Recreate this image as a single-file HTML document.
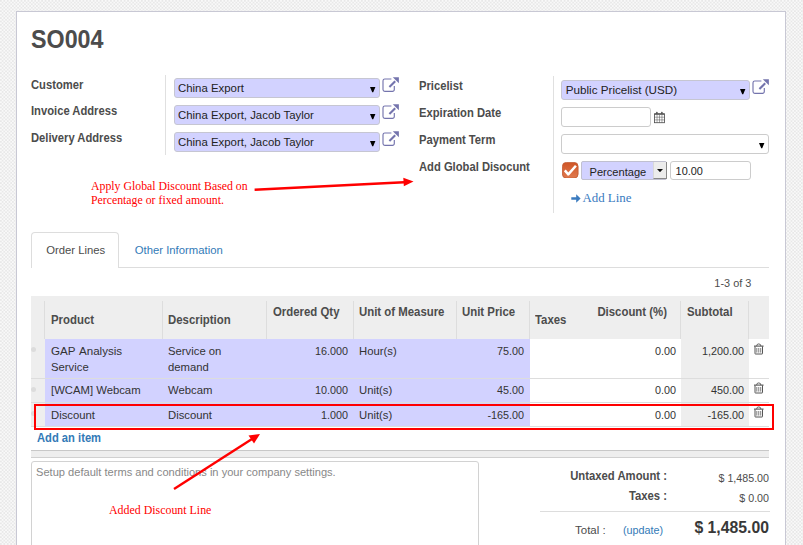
<!DOCTYPE html>
<html><head><meta charset="utf-8"><style>
html,body{margin:0;padding:0;}
body{width:803px;height:545px;overflow:hidden;position:relative;background-color:#efefef;
background-image:conic-gradient(#f9f9f9 25%,#e8e8e8 25% 50%,#f9f9f9 50% 75%,#e8e8e8 75%);background-size:3.44px 3.44px;}
.t{position:absolute;white-space:nowrap;font-kerning:none;}
.r{position:absolute;box-sizing:content-box;}
</style></head><body>
<div class="r" style="left:16px;top:11px;width:768px;height:700px;border:1px solid #c8c8d4;background:#fff;"></div>
<div class="t" style="left:31.3px;top:25.00px;font:bold 25.054px 'Liberation Sans', sans-serif;line-height:28.010px;color:#4c4c4c;transform:scaleX(0.93);transform-origin:0 0;">SO004</div>
<div class="t" style="left:31px;top:79.00px;font:bold 12.467px 'Liberation Sans', sans-serif;line-height:13.938px;color:#4c4c4c;transform:scaleX(0.9);transform-origin:0 0;">Customer</div>
<div class="t" style="left:31px;top:105.00px;font:bold 12.467px 'Liberation Sans', sans-serif;line-height:13.938px;color:#4c4c4c;transform:scaleX(0.9);transform-origin:0 0;">Invoice Address</div>
<div class="t" style="left:31px;top:132.00px;font:bold 12.467px 'Liberation Sans', sans-serif;line-height:13.938px;color:#4c4c4c;transform:scaleX(0.9);transform-origin:0 0;">Delivery Address</div>
<div class="t" style="left:419px;top:80.00px;font:bold 12.467px 'Liberation Sans', sans-serif;line-height:13.938px;color:#4c4c4c;transform:scaleX(0.9);transform-origin:0 0;">Pricelist</div>
<div class="t" style="left:419px;top:107.00px;font:bold 12.467px 'Liberation Sans', sans-serif;line-height:13.938px;color:#4c4c4c;transform:scaleX(0.9);transform-origin:0 0;">Expiration Date</div>
<div class="t" style="left:419px;top:134.00px;font:bold 12.467px 'Liberation Sans', sans-serif;line-height:13.938px;color:#4c4c4c;transform:scaleX(0.9);transform-origin:0 0;">Payment Term</div>
<div class="t" style="left:419px;top:161.00px;font:bold 12.467px 'Liberation Sans', sans-serif;line-height:13.938px;color:#4c4c4c;transform:scaleX(0.9);transform-origin:0 0;">Add Global Disocunt</div>
<div class="r" style="left:165px;top:75px;width:1px;height:80px;background:#e0e0e0;"></div>
<div class="r" style="left:553px;top:76px;width:1px;height:137px;background:#e0e0e0;"></div>
<div class="r" style="left:174px;top:78px;width:204px;height:18px;background:#d2d2ff;border:1px solid #c6c6d2;border-radius:3px;"></div>
<div class="t" style="left:178px;top:82.00px;font:normal 11.400px 'Liberation Sans', sans-serif;line-height:12.745px;color:#222;">China Export</div>
<svg class="r" style="left:370.1px;top:86.7px" width="6" height="6" viewBox="0 0 6 6"><path d="M0 0.1H5.4L3.2 5.2H2.2Z" fill="#000"/></svg>
<div class="r" style="left:174px;top:105px;width:204px;height:18px;background:#d2d2ff;border:1px solid #c6c6d2;border-radius:3px;"></div>
<div class="t" style="left:178px;top:109.00px;font:normal 11.400px 'Liberation Sans', sans-serif;line-height:12.745px;color:#222;">China Export, Jacob Taylor</div>
<svg class="r" style="left:370.1px;top:113.7px" width="6" height="6" viewBox="0 0 6 6"><path d="M0 0.1H5.4L3.2 5.2H2.2Z" fill="#000"/></svg>
<div class="r" style="left:174px;top:132px;width:204px;height:18px;background:#d2d2ff;border:1px solid #c6c6d2;border-radius:3px;"></div>
<div class="t" style="left:178px;top:136.00px;font:normal 11.400px 'Liberation Sans', sans-serif;line-height:12.745px;color:#222;">China Export, Jacob Taylor</div>
<svg class="r" style="left:370.1px;top:140.7px" width="6" height="6" viewBox="0 0 6 6"><path d="M0 0.1H5.4L3.2 5.2H2.2Z" fill="#000"/></svg>
<svg class="r" style="left:382px;top:77px" width="18" height="16" viewBox="0 0 18 16"><path d="M9.4 2H2.8A1.8 1.8 0 0 0 1 3.8V12.6A1.8 1.8 0 0 0 2.8 14.4H10.5A1.8 1.8 0 0 0 12.3 12.6V9" fill="none" stroke="#7474ad" stroke-width="1.15"/><path d="M7.4 10L13.2 4.2" stroke="#7474ad" stroke-width="2.1"/><path d="M10.8 0.2H16.9V6.3Z" fill="#7474ad"/></svg>
<svg class="r" style="left:382px;top:104px" width="18" height="16" viewBox="0 0 18 16"><path d="M9.4 2H2.8A1.8 1.8 0 0 0 1 3.8V12.6A1.8 1.8 0 0 0 2.8 14.4H10.5A1.8 1.8 0 0 0 12.3 12.6V9" fill="none" stroke="#7474ad" stroke-width="1.15"/><path d="M7.4 10L13.2 4.2" stroke="#7474ad" stroke-width="2.1"/><path d="M10.8 0.2H16.9V6.3Z" fill="#7474ad"/></svg>
<svg class="r" style="left:382px;top:131px" width="18" height="16" viewBox="0 0 18 16"><path d="M9.4 2H2.8A1.8 1.8 0 0 0 1 3.8V12.6A1.8 1.8 0 0 0 2.8 14.4H10.5A1.8 1.8 0 0 0 12.3 12.6V9" fill="none" stroke="#7474ad" stroke-width="1.15"/><path d="M7.4 10L13.2 4.2" stroke="#7474ad" stroke-width="2.1"/><path d="M10.8 0.2H16.9V6.3Z" fill="#7474ad"/></svg>
<div class="r" style="left:561px;top:80px;width:187px;height:18px;background:#d2d2ff;border:1px solid #c6c6d2;border-radius:3px;"></div>
<div class="t" style="left:565.8px;top:83.00px;font:normal 11.650px 'Liberation Sans', sans-serif;line-height:13.025px;color:#222;">Public Pricelist (USD)</div>
<svg class="r" style="left:740.1px;top:88.7px" width="6" height="6" viewBox="0 0 6 6"><path d="M0 0.1H5.4L3.2 5.2H2.2Z" fill="#000"/></svg>
<svg class="r" style="left:752px;top:79px" width="18" height="16" viewBox="0 0 18 16"><path d="M9.4 2H2.8A1.8 1.8 0 0 0 1 3.8V12.6A1.8 1.8 0 0 0 2.8 14.4H10.5A1.8 1.8 0 0 0 12.3 12.6V9" fill="none" stroke="#7474ad" stroke-width="1.15"/><path d="M7.4 10L13.2 4.2" stroke="#7474ad" stroke-width="2.1"/><path d="M10.8 0.2H16.9V6.3Z" fill="#7474ad"/></svg>
<div class="r" style="left:561px;top:107px;width:88px;height:18px;background:#fff;border:1px solid #ccc;border-radius:3px;"></div>
<svg class="r" style="left:654px;top:110.5px" width="11" height="13" viewBox="0 0 11 13"><rect x="0.5" y="2.9" width="10" height="8.8" fill="none" stroke="#505050" stroke-width="0.85"/><rect x="0.5" y="2.4" width="10" height="1.3" fill="#505050"/><rect x="2.2" y="0.7" width="1.3" height="2.4" rx="0.5" fill="#505050"/><rect x="7.2" y="0.7" width="1.3" height="2.4" rx="0.5" fill="#505050"/><path d="M0.5 6.2H10.5M0.5 8.9H10.5M3.05 3.7V11.7M5.5 3.7V11.7M7.95 3.7V11.7" stroke="#505050" stroke-width="0.5"/></svg>
<div class="r" style="left:561px;top:134px;width:206px;height:18px;background:#fff;border:1px solid #ccc;border-radius:3px;"></div>
<svg class="r" style="left:759.1px;top:142.7px" width="6" height="6" viewBox="0 0 6 6"><path d="M0 0.1H5.4L3.2 5.2H2.2Z" fill="#000"/></svg>
<svg class="r" style="left:562px;top:161.5px" width="16.5" height="16.5" viewBox="0 0 16.5 16.5"><defs><linearGradient id="cg" x1="0" y1="0" x2="0" y2="1"><stop offset="0" stop-color="#cf5526"/><stop offset="1" stop-color="#e07a4f"/></linearGradient></defs><rect x="0.4" y="0.4" width="15.7" height="15.7" rx="4" fill="url(#cg)" stroke="#c0582e" stroke-width="0.8"/><path d="M2.8 8.4L6.3 12.4L13.9 3.7" fill="none" stroke="#fff" stroke-width="2.5" stroke-linejoin="round"/></svg>
<div class="r" style="left:581px;top:161px;width:84px;height:17px;background:#d2d2ff;border:1px solid #c0c0d0;border-radius:2px;"></div>
<div class="r" style="left:653px;top:162px;width:12px;height:16px;background:#ececec;border-left:1px solid #d8d8d8;border-right:1px solid #888;border-bottom:1px solid #888;"></div>
<svg class="r" style="left:657.4px;top:168.5px" width="6" height="3.2" viewBox="0 0 6 3.2"><path d="M0 0H6L3 3.2Z" fill="#111"/></svg>
<div class="t" style="left:589.5px;top:166.00px;font:normal 11.100px 'Liberation Sans', sans-serif;line-height:12.410px;color:#222;">Percentage</div>
<div class="r" style="left:670px;top:161px;width:79px;height:17px;background:#fff;border:1px solid #ccc;border-radius:3px;"></div>
<div class="t" style="left:675.6px;top:165.00px;font:normal 10.900px 'Liberation Sans', sans-serif;line-height:12.186px;color:#222;">10.00</div>
<svg class="r" style="left:571px;top:193.7px" width="10" height="9" viewBox="0 0 10 9"><path d="M0.3 3.3H5.2V0.3L9.6 4.5L5.2 8.7V5.7H0.3Z" fill="#3a7bbf"/></svg>
<div class="t" style="left:582.4px;top:191.00px;font:normal 12.900px 'Liberation Serif', serif;line-height:14.306px;color:#3a7bbf;">Add Line</div>
<div class="t" style="left:91px;top:180.00px;font:normal 11.800px 'Liberation Serif', serif;line-height:13.086px;color:#f00;">Apply Global Discount Based on</div>
<div class="t" style="left:91px;top:194.00px;font:normal 11.800px 'Liberation Serif', serif;line-height:13.086px;color:#f00;">Percentage or fixed amount.</div>
<svg class="r" style="left:0;top:0" width="803" height="545" viewBox="0 0 803 545"><path d="M254.6 189.7L404 182.2" stroke="#f00" stroke-width="2.4" fill="none"/><path d="M413.5 181.6L403.3 177.8L403.8 186.2Z" fill="#f00"/></svg>
<div class="r" style="left:31px;top:267px;width:738px;height:1px;background:#ddd;"></div>
<div class="r" style="left:31px;top:232px;width:86px;height:35px;background:#fff;border:1px solid #ddd;border-bottom:none;border-radius:4px 4px 0 0;"></div>
<div class="t" style="left:46.2px;top:244.00px;font:normal 11.300px 'Liberation Sans', sans-serif;line-height:12.633px;color:#4c4c4c;">Order Lines</div>
<div class="t" style="left:134.8px;top:244.00px;font:normal 11.300px 'Liberation Sans', sans-serif;line-height:12.633px;color:#337ab7;">Other Information</div>
<div class="t" style="left:151.29999999999995px;width:600px;text-align:right;top:277.00px;font:normal 10.900px 'Liberation Sans', sans-serif;line-height:12.186px;color:#4c4c4c;">1-3 of 3</div>
<div class="r" style="left:31px;top:296px;width:738px;height:43px;background:#eee;"></div>
<div class="r" style="left:44px;top:301px;width:1px;height:38px;background:#ddd;"></div>
<div class="r" style="left:162px;top:301px;width:1px;height:38px;background:#ddd;"></div>
<div class="r" style="left:266px;top:301px;width:1px;height:38px;background:#ddd;"></div>
<div class="r" style="left:353px;top:301px;width:1px;height:38px;background:#ddd;"></div>
<div class="r" style="left:456px;top:301px;width:1px;height:38px;background:#ddd;"></div>
<div class="r" style="left:529px;top:301px;width:1px;height:38px;background:#ddd;"></div>
<div class="r" style="left:680px;top:301px;width:1px;height:38px;background:#ddd;"></div>
<div class="r" style="left:748px;top:301px;width:1px;height:38px;background:#ddd;"></div>
<div class="r" style="left:31px;top:339px;width:14px;height:40px;background:#eee;"></div>
<div class="r" style="left:45px;top:339px;width:485px;height:40px;background:#d2d2ff;"></div>
<div class="r" style="left:530px;top:339px;width:150px;height:40px;background:#fff;"></div>
<div class="r" style="left:681px;top:339px;width:68px;height:40px;background:#eee;"></div>
<div class="r" style="left:749px;top:339px;width:20px;height:40px;background:#fff;"></div>
<div class="r" style="left:31px;top:378px;width:738px;height:1px;background:#ddd;"></div>
<div class="r" style="left:31px;top:347px;width:5px;height:5px;border-radius:50%;background:#dcdcdc"></div>
<div class="r" style="left:31px;top:379px;width:14px;height:24px;background:#eee;"></div>
<div class="r" style="left:45px;top:379px;width:485px;height:24px;background:#d2d2ff;"></div>
<div class="r" style="left:530px;top:379px;width:150px;height:24px;background:#fff;"></div>
<div class="r" style="left:681px;top:379px;width:68px;height:24px;background:#eee;"></div>
<div class="r" style="left:749px;top:379px;width:20px;height:24px;background:#fff;"></div>
<div class="r" style="left:31px;top:402px;width:738px;height:1px;background:#ddd;"></div>
<div class="r" style="left:31px;top:387px;width:5px;height:5px;border-radius:50%;background:#dcdcdc"></div>
<div class="r" style="left:31px;top:403px;width:14px;height:24px;background:#eee;"></div>
<div class="r" style="left:45px;top:403px;width:485px;height:24px;background:#d2d2ff;"></div>
<div class="r" style="left:530px;top:403px;width:150px;height:24px;background:#fff;"></div>
<div class="r" style="left:681px;top:403px;width:68px;height:24px;background:#eee;"></div>
<div class="r" style="left:749px;top:403px;width:20px;height:24px;background:#fff;"></div>
<div class="r" style="left:31px;top:426px;width:738px;height:1px;background:#ddd;"></div>
<div class="r" style="left:31px;top:411px;width:5px;height:5px;border-radius:50%;background:#dcdcdc"></div>
<div class="t" style="left:51px;top:313.00px;font:bold 12.667px 'Liberation Sans', sans-serif;line-height:14.162px;color:#4c4c4c;transform:scaleX(0.9);transform-origin:0 0;">Product</div>
<div class="t" style="left:168px;top:313.00px;font:bold 12.667px 'Liberation Sans', sans-serif;line-height:14.162px;color:#4c4c4c;transform:scaleX(0.9);transform-origin:0 0;">Description</div>
<div class="t" style="left:273px;top:305.00px;font:bold 12.667px 'Liberation Sans', sans-serif;line-height:14.162px;color:#4c4c4c;transform:scaleX(0.9);transform-origin:0 0;">Ordered Qty</div>
<div class="t" style="left:359px;top:305.00px;font:bold 12.667px 'Liberation Sans', sans-serif;line-height:14.162px;color:#4c4c4c;transform:scaleX(0.9);transform-origin:0 0;">Unit of Measure</div>
<div class="t" style="left:462px;top:305.00px;font:bold 12.667px 'Liberation Sans', sans-serif;line-height:14.162px;color:#4c4c4c;transform:scaleX(0.9);transform-origin:0 0;">Unit Price</div>
<div class="t" style="left:535px;top:313.00px;font:bold 12.667px 'Liberation Sans', sans-serif;line-height:14.162px;color:#4c4c4c;transform:scaleX(0.9);transform-origin:0 0;">Taxes</div>
<div class="t" style="left:67px;width:600px;text-align:right;top:305.00px;font:bold 12.667px 'Liberation Sans', sans-serif;line-height:14.162px;color:#4c4c4c;transform:scaleX(0.9);transform-origin:100% 0;">Discount (%)</div>
<div class="t" style="left:687px;top:305.00px;font:bold 12.667px 'Liberation Sans', sans-serif;line-height:14.162px;color:#4c4c4c;transform:scaleX(0.9);transform-origin:0 0;">Subtotal</div>
<div class="t" style="left:51px;top:345.00px;font:normal 11.600px 'Liberation Sans', sans-serif;line-height:12.969px;color:#333333;word-spacing:1.1px;">GAP Analysis</div>
<div class="t" style="left:168px;top:345.00px;font:normal 11.300px 'Liberation Sans', sans-serif;line-height:12.633px;color:#333333;">Service on</div>
<div class="t" style="left:-252px;width:600px;text-align:right;top:345.00px;font:normal 10.800px 'Liberation Sans', sans-serif;line-height:12.074px;color:#333333;">16.000</div>
<div class="t" style="left:359px;top:345.00px;font:normal 11.300px 'Liberation Sans', sans-serif;line-height:12.633px;color:#333333;">Hour(s)</div>
<div class="t" style="left:-76px;width:600px;text-align:right;top:345.00px;font:normal 10.800px 'Liberation Sans', sans-serif;line-height:12.074px;color:#333333;">75.00</div>
<div class="t" style="left:76px;width:600px;text-align:right;top:345.00px;font:normal 10.800px 'Liberation Sans', sans-serif;line-height:12.074px;color:#333333;">0.00</div>
<div class="t" style="left:144px;width:600px;text-align:right;top:345.00px;font:normal 10.800px 'Liberation Sans', sans-serif;line-height:12.074px;color:#333333;">1,200.00</div>
<div class="t" style="left:51px;top:361.00px;font:normal 11.300px 'Liberation Sans', sans-serif;line-height:12.633px;color:#333333;">Service</div>
<div class="t" style="left:168px;top:361.00px;font:normal 11.300px 'Liberation Sans', sans-serif;line-height:12.633px;color:#333333;">demand</div>
<div class="t" style="left:51px;top:384.00px;font:normal 11.300px 'Liberation Sans', sans-serif;line-height:12.633px;color:#333333;">[WCAM] Webcam</div>
<div class="t" style="left:168px;top:384.00px;font:normal 11.300px 'Liberation Sans', sans-serif;line-height:12.633px;color:#333333;">Webcam</div>
<div class="t" style="left:-252px;width:600px;text-align:right;top:384.00px;font:normal 10.800px 'Liberation Sans', sans-serif;line-height:12.074px;color:#333333;">10.000</div>
<div class="t" style="left:359px;top:384.00px;font:normal 11.300px 'Liberation Sans', sans-serif;line-height:12.633px;color:#333333;">Unit(s)</div>
<div class="t" style="left:-76px;width:600px;text-align:right;top:384.00px;font:normal 10.800px 'Liberation Sans', sans-serif;line-height:12.074px;color:#333333;">45.00</div>
<div class="t" style="left:76px;width:600px;text-align:right;top:384.00px;font:normal 10.800px 'Liberation Sans', sans-serif;line-height:12.074px;color:#333333;">0.00</div>
<div class="t" style="left:144px;width:600px;text-align:right;top:384.00px;font:normal 10.800px 'Liberation Sans', sans-serif;line-height:12.074px;color:#333333;">450.00</div>
<div class="t" style="left:51px;top:409.00px;font:normal 11.300px 'Liberation Sans', sans-serif;line-height:12.633px;color:#333333;">Discount</div>
<div class="t" style="left:168px;top:409.00px;font:normal 11.300px 'Liberation Sans', sans-serif;line-height:12.633px;color:#333333;">Discount</div>
<div class="t" style="left:-252px;width:600px;text-align:right;top:409.00px;font:normal 10.800px 'Liberation Sans', sans-serif;line-height:12.074px;color:#333333;">1.000</div>
<div class="t" style="left:359px;top:409.00px;font:normal 11.300px 'Liberation Sans', sans-serif;line-height:12.633px;color:#333333;">Unit(s)</div>
<div class="t" style="left:-76px;width:600px;text-align:right;top:409.00px;font:normal 10.800px 'Liberation Sans', sans-serif;line-height:12.074px;color:#333333;">-165.00</div>
<div class="t" style="left:76px;width:600px;text-align:right;top:409.00px;font:normal 10.800px 'Liberation Sans', sans-serif;line-height:12.074px;color:#333333;">0.00</div>
<div class="t" style="left:144px;width:600px;text-align:right;top:409.00px;font:normal 10.800px 'Liberation Sans', sans-serif;line-height:12.074px;color:#333333;">-165.00</div>
<svg class="r" style="left:754px;top:342.7px" width="10" height="12" viewBox="0 0 10 12"><path d="M2.6 3.2Q2.6 0.9 4.75 0.9Q6.9 0.9 6.9 3.2" fill="none" stroke="#555" stroke-width="0.9"/><path d="M0 3.1H9.5" stroke="#555" stroke-width="1.1"/><path d="M1 3.3V10.6Q1 11 1.4 11H8.1Q8.5 11 8.5 10.6V3.3" fill="none" stroke="#555" stroke-width="1"/><path d="M2.8 5V9.6M4.75 5V9.6M6.7 5V9.6" stroke="#555" stroke-width="0.75"/></svg>
<svg class="r" style="left:754px;top:382.4px" width="10" height="12" viewBox="0 0 10 12"><path d="M2.6 3.2Q2.6 0.9 4.75 0.9Q6.9 0.9 6.9 3.2" fill="none" stroke="#555" stroke-width="0.9"/><path d="M0 3.1H9.5" stroke="#555" stroke-width="1.1"/><path d="M1 3.3V10.6Q1 11 1.4 11H8.1Q8.5 11 8.5 10.6V3.3" fill="none" stroke="#555" stroke-width="1"/><path d="M2.8 5V9.6M4.75 5V9.6M6.7 5V9.6" stroke="#555" stroke-width="0.75"/></svg>
<svg class="r" style="left:754px;top:406.2px" width="10" height="12" viewBox="0 0 10 12"><path d="M2.6 3.2Q2.6 0.9 4.75 0.9Q6.9 0.9 6.9 3.2" fill="none" stroke="#555" stroke-width="0.9"/><path d="M0 3.1H9.5" stroke="#555" stroke-width="1.1"/><path d="M1 3.3V10.6Q1 11 1.4 11H8.1Q8.5 11 8.5 10.6V3.3" fill="none" stroke="#555" stroke-width="1"/><path d="M2.8 5V9.6M4.75 5V9.6M6.7 5V9.6" stroke="#555" stroke-width="0.75"/></svg>
<div class="r" style="left:34px;top:404px;width:736px;height:21.6px;border:2.2px solid #f00;"></div>
<div class="t" style="left:37.3px;top:432.00px;font:bold 12.444px 'Liberation Sans', sans-serif;line-height:13.912px;color:#337ab7;transform:scaleX(0.9);transform-origin:0 0;">Add an item</div>
<div class="r" style="left:31px;top:450px;width:738px;height:6px;background:#eee;border-top:1px solid #c8c8c8;border-bottom:1px solid #d0d0d0;"></div>
<div class="r" style="left:31px;top:461px;width:446px;height:100px;background:#fff;border:1px solid #d2d2d2;border-radius:3px;"></div>
<div class="t" style="left:36px;top:466.00px;font:normal 11.100px 'Liberation Sans', sans-serif;line-height:12.410px;color:#888;">Setup default terms and conditions in your company settings.</div>
<div class="t" style="left:109px;top:504.00px;font:normal 11.900px 'Liberation Serif', serif;line-height:13.197px;color:#f00;">Added Discount Line</div>
<svg class="r" style="left:0;top:0" width="803" height="545" viewBox="0 0 803 545"><path d="M174 489L252 439" stroke="#f00" stroke-width="2.4" fill="none"/><path d="M260 434L248.5 435.5L254 443.5Z" fill="#f00"/></svg>
<div class="t" style="left:66.70000000000005px;width:600px;text-align:right;top:469.00px;font:bold 12.556px 'Liberation Sans', sans-serif;line-height:14.038px;color:#4c4c4c;transform:scaleX(0.9);transform-origin:100% 0;">Untaxed Amount :</div>
<div class="t" style="left:169px;width:600px;text-align:right;top:473.00px;font:normal 10.700px 'Liberation Sans', sans-serif;line-height:11.963px;color:#4c4c4c;">$ 1,485.00</div>
<div class="t" style="left:66.70000000000005px;width:600px;text-align:right;top:489.00px;font:bold 12.556px 'Liberation Sans', sans-serif;line-height:14.038px;color:#4c4c4c;transform:scaleX(0.9);transform-origin:100% 0;">Taxes :</div>
<div class="t" style="left:169px;width:600px;text-align:right;top:493.00px;font:normal 10.700px 'Liberation Sans', sans-serif;line-height:11.963px;color:#4c4c4c;">$ 0.00</div>
<div class="r" style="left:540px;top:511px;width:230px;height:1px;background:#ddd;"></div>
<div class="t" style="left:575px;top:524.00px;font:normal 11.500px 'Liberation Sans', sans-serif;line-height:12.857px;color:#4c4c4c;">Total :</div>
<div class="t" style="left:623px;top:524.00px;font:normal 10.800px 'Liberation Sans', sans-serif;line-height:12.074px;color:#337ab7;">(update)</div>
<div class="t" style="left:169px;width:600px;text-align:right;top:518.00px;font:bold 16.989px 'Liberation Sans', sans-serif;line-height:18.994px;color:#383838;transform:scaleX(0.93);transform-origin:100% 0;">$ 1,485.00</div>
</body></html>
